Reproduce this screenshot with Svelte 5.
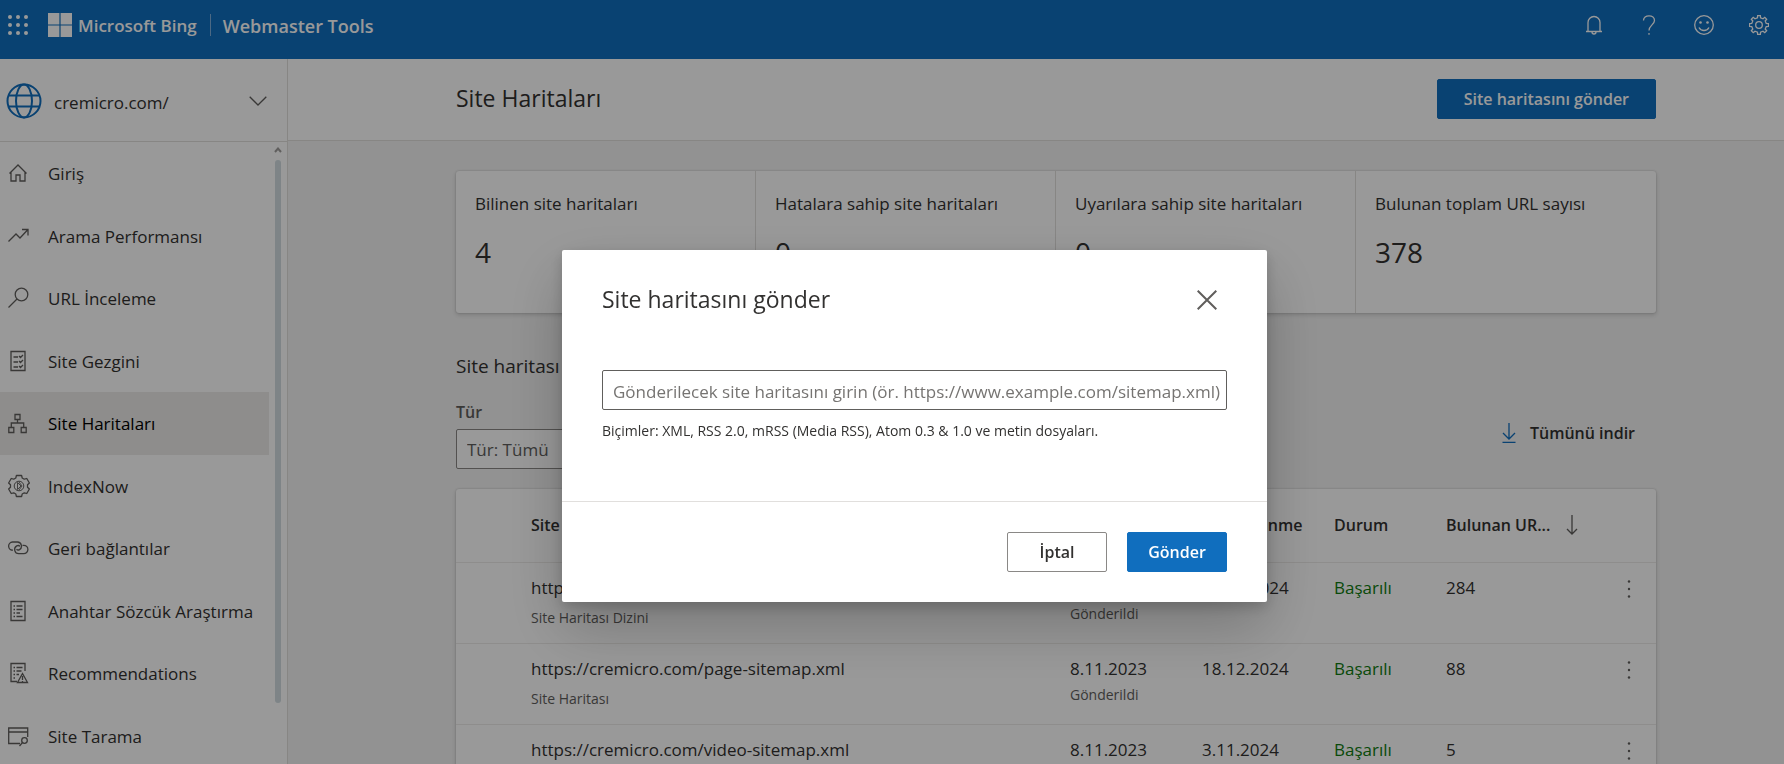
<script lang="ts">
	let sitemapUrl = $state('');

	const nav = [
		{ icon: 'home', label: 'Giriş' },
		{ icon: 'trend', label: 'Arama Performansı' },
		{ icon: 'search', label: 'URL İnceleme' },
		{ icon: 'checklist', label: 'Site Gezgini' },
		{ icon: 'sitemap', label: 'Site Haritaları', active: true },
		{ icon: 'indexnow', label: 'IndexNow' },
		{ icon: 'link', label: 'Geri bağlantılar' },
		{ icon: 'doc', label: 'Anahtar Sözcük Araştırma' },
		{ icon: 'docwarn', label: 'Recommendations' },
		{ icon: 'scan', label: 'Site Tarama' }
	];

	const stats = [
		{ label: 'Bilinen site haritaları', value: 4 },
		{ label: 'Hatalara sahip site haritaları', value: 0 },
		{ label: 'Uyarılara sahip site haritaları', value: 0 },
		{ label: 'Bulunan toplam URL sayısı', value: 378 }
	];

	const rows = [
		{ url: 'https://cremicro.com/sitemap_index.xml', type: 'Site Haritası Dizini', sent: '8.11.2023', crawled: '18.12.2024', count: 284 },
		{ url: 'https://cremicro.com/page-sitemap.xml', type: 'Site Haritası', sent: '8.11.2023', crawled: '18.12.2024', count: 88 },
		{ url: 'https://cremicro.com/video-sitemap.xml', type: 'Site Haritası', sent: '8.11.2023', crawled: '3.11.2024', count: 5 }
	];

	// outline of a cog wheel; tip and root are half widths in degrees
	function gear(cx: number, cy: number, teeth: number, outer: number, inner: number, tip: number, root: number) {
		const points: string[] = [];
		for (let i = 0; i < teeth; i++) {
			const mid = (360 / teeth) * i - 90;
			for (const [offset, r] of [[-root, inner], [-tip, outer], [tip, outer], [root, inner]]) {
				const a = ((mid + offset) * Math.PI) / 180;
				points.push(`${(cx + r * Math.cos(a)).toFixed(2)} ${(cy + r * Math.sin(a)).toFixed(2)}`);
			}
		}
		return `M${points.join('L')}Z`;
	}
</script>

{#snippet navIcon(name: string)}
	<svg class="nav-icon" viewBox="0 0 24 24" aria-hidden="true">
		{#if name === 'home'}
			<path d="M1.5 12.5L10 4l8.500 8.500M3 11v9h5v-6h4v6h5v-9" />
		{:else if name === 'trend'}
			<path d="M.5 17.500L8 10l4 4 7.500-8M14 5.500h6v6" />
		{:else if name === 'search'}
			<circle cx="13.500" cy="8.500" r="6.300" /><path d="M9 13L.500 21.500" />
		{:else if name === 'checklist'}
			<path d="M3 2.500h14v19H3zM5.500 8h4.500M5.500 13h4.500M5.500 18h4.500M11 7l1.500 1.500L15 6M11 12l1.500 1.500L15 11M11 17l1.500 1.500L15 16" />
		{:else if name === 'sitemap'}
			<path d="M7 3.500h5v5H7zM.800 16.500h5v5h-5zM13.200 16.500h5v5h-5zM9.500 8.500V12M3.300 16.500V12h12.400v4.500" />
		{:else if name === 'indexnow'}
			<path d={gear(11, 12, 6, 10.8, 8.6, 14, 22)} stroke-linejoin="round" />
			<circle cx="11" cy="12" r="4.800" stroke-width="1" /><path d="M9.500 8.500v7l3.500-3.500zM11 8l3 4-3 4" stroke-width=".900" />
		{:else if name === 'link'}
			<path d="M5 14.200A4.100 4.100 0 0 1 4.500 6h5a4.100 4.100 0 0 1 2 7.600c-1 .600-2.200.500-3-.300" />
			<path d="M14.500 9.300h1.200a4.200 4.200 0 0 1 0 8.400h-5a4.200 4.200 0 0 1-2-7.800c1.200-.600 2.500-.400 3.400.500" />
		{:else if name === 'doc'}
			<path d="M3 2.500h14v19H3zM5.500 7H7M8.500 7h6M5.500 10.500H7M8.500 10.500h6M5.500 14H7M8.500 14H12M5.500 17.500H7M8.500 17.500h6" />
		{:else if name === 'docwarn'}
			<path d="M9 20.500H3v-18h14V10M5.500 6.500H7M8.500 6.500h6M5.500 10H7M8.500 10h5M5.500 13.500H7M8.500 13.500H11M5.500 17H7M14.500 12.500l-5 9h10zM14.500 15v4M14.500 20v1" />
		{:else}
			<path d="M12 19.500H.700V4h19v9M.700 8h19" /><circle cx="16.500" cy="16.500" r="2.800" /><path d="M14.500 18.500L11.500 22" />
		{/if}
	</svg>
{/snippet}

<div class="app">
	<header class="topbar">
		<button class="plain" aria-label="Uygulama başlatıcı">
			<svg class="waffle" viewBox="0 0 20 20" aria-hidden="true">
				{#each [2, 10, 18] as y}
					{#each [2, 10, 18] as x}
						<circle cx={x} cy={y} r="2" />
					{/each}
				{/each}
			</svg>
		</button>
		<svg class="ms-logo" viewBox="0 0 24 24" aria-hidden="true">
			<path d="M0 0h11.400v11.400H0zM12.600 0H24v11.400H12.600zM0 12.600h11.400V24H0zM12.600 12.600H24V24H12.600z" />
		</svg>
		<span class="brand">Microsoft Bing</span>
		<span class="product">Webmaster Tools</span>
		<div class="tools">
			<button class="plain" aria-label="Bildirimler">
				<svg viewBox="0 0 20 20" aria-hidden="true"><path d="M4 16.500V7.500a6 6 0 0 1 12 0v9M2 16.500h16M8 17a2 2 0 0 0 4 0" /></svg>
			</button>
			<button class="plain" aria-label="Yardım">
				<svg viewBox="0 0 20 20" aria-hidden="true"><path d="M4.500 5.500C4.500 2.500 7 .800 10 .800s5.500 1.800 5.500 4.700c0 4-5.500 5-5.500 10M10 18v1.700" /></svg>
			</button>
			<button class="plain" aria-label="Geri bildirim">
				<svg viewBox="0 0 20 20" aria-hidden="true"><circle cx="10" cy="10" r="9.300" /><path d="M5 12.500c2 4 8 4 10 0" /><circle class="dot" cx="6.500" cy="7.500" r="1.300" /><circle class="dot" cx="13.500" cy="7.500" r="1.300" /></svg>
			</button>
			<button class="plain" aria-label="Ayarlar">
				<svg viewBox="0 0 20 20" aria-hidden="true"><path d={gear(10, 10, 8, 9.6, 7.4, 8, 12)} /><circle cx="10" cy="10" r="3.300" /></svg>
			</button>
		</div>
	</header>

	<div class="body">
		<aside class="sidebar">
			<button class="site-picker">
				<svg class="globe" viewBox="0 0 36 36" aria-hidden="true">
					<circle cx="18" cy="18" r="16.500" /><ellipse cx="18" cy="18" rx="8" ry="16.500" /><path d="M2.500 12.500h31M2.500 23.500h31" />
				</svg>
				<span class="site-name">cremicro.com/</span>
				<svg class="chevron" viewBox="0 0 18 10" aria-hidden="true"><path d="M.700.700L9 9l8.300-8.300" /></svg>
			</button>
			<div class="nav-wrap">
				<nav>
					{#each nav as item}
						<a href="#{item.icon}" class:active={item.active}>
							{@render navIcon(item.icon)}
							<span>{item.label}</span>
						</a>
					{/each}
				</nav>
				<div class="scrollbar">
					<svg viewBox="0 0 8 6" aria-hidden="true"><path d="M1 5l3-3.500L7 5" /></svg>
					<div class="thumb"></div>
				</div>
			</div>
		</aside>

		<main>
			<div class="page-head">
				<h1>Site Haritaları</h1>
				<button class="primary wide">Site haritasını gönder</button>
			</div>

			<div class="content">
				<div class="stats card">
					{#each stats as stat}
						<div class="stat">
							<span>{stat.label}</span>
							<strong>{stat.value}</strong>
						</div>
					{/each}
				</div>

				<h2>Site haritası</h2>
				<div class="filters">
					<div class="filter">
						<label for="type">Tür</label>
						<select id="type">
							<option>Tür: Tümü</option>
						</select>
					</div>
					<button class="plain download">
						<svg viewBox="0 0 16 20" aria-hidden="true"><path d="M8 0v15.500M2 10l6 6 6-6M1.500 19.300h13" /></svg>
						Tümünü indir
					</button>
				</div>

				<div class="card">
					<table>
						<thead>
							<tr>
								<th class="col-url">Site haritası</th>
								<th class="col-sent">Gönderim</th>
								<th class="col-crawl">Son Gezinme</th>
								<th class="col-status">Durum</th>
								<th class="col-count">
									<span class="sort">
										Bulunan UR...
										<svg viewBox="0 0 12 20" aria-hidden="true"><path d="M6 0v19M1 14l5 5 5-5" /></svg>
									</span>
								</th>
								<th class="col-menu"></th>
							</tr>
						</thead>
						<tbody>
							{#each rows as row}
								<tr>
									<td class="col-url">{row.url}<small class="type">{row.type}</small></td>
									<td>{row.sent}<small>Gönderildi</small></td>
									<td>{row.crawled}</td>
									<td class="ok">Başarılı</td>
									<td>{row.count}</td>
									<td>
										<button class="plain more" aria-label="Diğer seçenekler">
											<svg viewBox="0 0 4 20" aria-hidden="true"><circle cx="2" cy="2.500" r="1.200" /><circle cx="2" cy="10" r="1.200" /><circle cx="2" cy="17.500" r="1.200" /></svg>
										</button>
									</td>
								</tr>
							{/each}
						</tbody>
					</table>
				</div>
			</div>
		</main>
	</div>
</div>

<div class="overlay">
	<div class="dialog" role="dialog" aria-modal="true" aria-labelledby="dialog-title">
		<div class="dialog-head">
			<h2 id="dialog-title">Site haritasını gönder</h2>
			<button class="plain close" aria-label="Kapat">
				<svg viewBox="0 0 20 20" aria-hidden="true"><path d="M.700.700l18.600 18.600M19.300.700L.700 19.300" /></svg>
			</button>
		</div>
		<div class="dialog-body">
			<input
				type="text"
				bind:value={sitemapUrl}
				aria-label="Site haritası URL'si"
				aria-describedby="formats"
				placeholder="Gönderilecek site haritasını girin (ör. https://www.example.com/sitemap.xml)"
			/>
			<p id="formats">Biçimler: XML, RSS 2.0, mRSS (Media RSS), Atom 0.3 &amp; 1.0 ve metin dosyaları.</p>
		</div>
		<div class="dialog-foot">
			<button class="secondary">İptal</button>
			<button class="primary">Gönder</button>
		</div>
	</div>
</div>

<style>
	:global(body) {
		margin: 0;
		overflow: hidden;
		font-family: 'Segoe UI', 'Open Sans', 'Noto Sans', sans-serif;
		font-size: 17px;
		line-height: 24px;
		color: #323130;
	}

	* {
		box-sizing: border-box;
	}

	button,
	input,
	select {
		font: inherit;
		color: inherit;
	}

	svg {
		display: block;
		flex: none;
		fill: none;
		stroke: currentColor;
		stroke-width: 1.3;
	}

	h1,
	h2,
	p {
		margin: 0;
		font-weight: 400;
	}

	.plain {
		padding: 0;
		border: 0;
		background: none;
	}

	.app {
		display: flex;
		flex-direction: column;
		height: 100vh;
		overflow: hidden;
	}

	.topbar {
		display: flex;
		flex: none;
		align-items: center;
		height: 59px;
		padding: 0 15px 9px 8px;
		background: #106ebe;
		color: #fff;
	}

	.waffle {
		width: 20px;
		height: 20px;
		fill: #fff;
		stroke: none;
	}

	.ms-logo {
		width: 24px;
		height: 24px;
		margin-left: 20px;
		fill: #fff;
		stroke: none;
	}

	.brand,
	.product {
		padding-top: 2px;
		font-weight: 600;
		line-height: 20px;
	}

	.brand {
		margin-left: 6px;
	}

	.product {
		margin-left: 13px;
		padding-left: 12px;
		border-left: 1px solid #7fb0dc;
		font-size: 18px;
	}

	.tools {
		display: flex;
		gap: 35px;
		margin-left: auto;
	}

	.tools svg {
		width: 20px;
		height: 20px;
	}

	.dot {
		fill: currentColor;
		stroke: none;
	}

	.body {
		display: flex;
		flex: 1;
		min-height: 0;
	}

	.sidebar {
		display: flex;
		flex: none;
		flex-direction: column;
		width: 288px;
		border-right: 1px solid #e1dfdd;
		background: #fff;
	}

	.site-picker {
		display: flex;
		flex: none;
		align-items: center;
		height: 83px;
		padding: 2px 20px 0 6px;
		border: 0;
		border-bottom: 1px solid #e1dfdd;
		background: none;
		text-align: left;
	}

	.globe {
		width: 36px;
		height: 36px;
		color: #106ebe;
		stroke-width: 2;
	}

	.site-name {
		flex: 1;
		margin: 4px 0 0 12px;
	}

	.chevron {
		width: 18px;
		height: 10px;
		color: #605e5c;
	}

	.nav-wrap {
		display: flex;
		flex: 1;
		min-height: 0;
	}

	nav {
		display: grid;
		grid-template-rows: repeat(10, 1fr);
		flex: 1;
		height: 625px;
	}

	nav a {
		display: flex;
		gap: 16px;
		align-items: center;
		padding-left: 8px;
		color: #323130;
		text-decoration: none;
	}

	nav a.active {
		background: #edebe9;
		color: #000;
	}

	nav span {
		padding-top: 2px;
	}

	.nav-icon {
		width: 24px;
		height: 24px;
		color: #605e5c;
	}

	.scrollbar {
		display: flex;
		flex-direction: column;
		align-items: center;
		gap: 7px;
		width: 18px;
		padding: 5px 0 61px;
	}

	.scrollbar svg {
		width: 8px;
		height: 6px;
		color: #a19f9d;
		stroke-width: 2;
	}

	.thumb {
		flex: 1;
		width: 6px;
		border-radius: 3px;
		background: #d2dce2;
	}

	main {
		flex: 1;
		min-width: 0;
		background: #f3f3f3;
	}

	.page-head {
		display: flex;
		align-items: center;
		justify-content: space-between;
		height: 82px;
		padding: 0 128px 2px 168px;
		border-bottom: 1px solid #e1dfdd;
		background: #fff;
	}

	h1,
	.dialog h2 {
		padding-bottom: 2px;
		font-size: 23px;
		line-height: 32px;
	}

	.primary,
	.secondary {
		min-width: 100px;
		height: 40px;
		padding: 0 20px;
		border: 1px solid #8a8886;
		border-radius: 2px;
		background: #fff;
		font-size: 16px;
		font-weight: 600;
	}

	.primary {
		border-color: #106ebe;
		background: #106ebe;
		color: #fff;
	}

	.wide {
		padding: 0 26px;
	}

	.content {
		padding: 30px 128px 0 168px;
	}

	.card {
		border-radius: 3px;
		background: #fff;
		box-shadow: 0 0 2px rgba(0, 0, 0, 0.2), 0 2px 4px rgba(0, 0, 0, 0.15);
	}

	.stats {
		display: grid;
		grid-template-columns: repeat(4, 1fr);
	}

	.stat {
		display: flex;
		flex-direction: column;
		gap: 20px;
		height: 142px;
		padding: 21px 19px;
		border-right: 1px solid #e1dfdd;
	}

	.stat:last-child {
		border-right: 0;
	}

	.stat strong {
		font-size: 28px;
		font-weight: 400;
		line-height: 32px;
	}

	.content h2 {
		margin-top: 41px;
		font-size: 19px;
	}

	.filters {
		display: flex;
		align-items: center;
		justify-content: space-between;
		margin: 22px 0 20px;
	}

	.filter {
		display: flex;
		flex-direction: column;
		gap: 5px;
		width: 240px;
		color: #605e5c;
	}

	.filter label {
		font-size: 16px;
		font-weight: 600;
	}

	select {
		height: 40px;
		padding: 2px 10px 0;
		border: 1px solid #8a8886;
		border-radius: 2px;
		background: #fff;
		appearance: none;
	}

	.download {
		display: flex;
		gap: 13px;
		align-items: center;
		margin: 0 21px 4px 0;
		font-size: 16px;
		font-weight: 600;
	}

	.download svg {
		width: 16px;
		height: 20px;
		color: #106ebe;
	}

	table {
		width: 100%;
		border-collapse: collapse;
		table-layout: fixed;
	}

	th,
	td {
		padding: 0;
		border-bottom: 1px solid #edebe9;
		text-align: left;
	}

	th {
		height: 73px;
		font-size: 16px;
		font-weight: 600;
		white-space: nowrap;
	}

	td {
		height: 81px;
		padding-top: 13px;
		vertical-align: top;
	}

	.col-url {
		padding-left: 75px;
	}

	.col-sent,
	.col-crawl {
		width: 132px;
	}

	.col-status {
		width: 112px;
	}

	.col-count {
		width: 181px;
	}

	.col-menu {
		width: 29px;
	}

	small {
		display: block;
		margin-top: 2px;
		color: #605e5c;
		font-size: 14px;
	}

	small.type {
		margin-top: 6px;
	}

	.ok {
		color: #107c10;
	}

	.sort {
		display: flex;
		gap: 16px;
		align-items: center;
	}

	.sort svg {
		width: 12px;
		height: 20px;
		color: #605e5c;
	}

	.more svg {
		width: 4px;
		height: 20px;
		margin-top: 3px;
		fill: #605e5c;
		stroke: none;
	}

	.overlay {
		position: fixed;
		inset: 0;
		display: flex;
		align-items: center;
		justify-content: center;
		padding: 88px 0 0 45px;
		background: rgba(0, 0, 0, 0.4);
	}

	.dialog {
		width: 705px;
		border-radius: 2px;
		background: #fff;
		box-shadow: 0 26px 58px rgba(0, 0, 0, 0.22), 0 5px 14px rgba(0, 0, 0, 0.18);
	}

	.dialog-head {
		display: flex;
		align-items: center;
		justify-content: space-between;
		padding: 33px 50px 0 40px;
	}

	.close {
		color: #605e5c;
	}

	.close svg {
		width: 20px;
		height: 20px;
		stroke-width: 2;
	}

	.dialog-body {
		padding: 53px 40px 58px;
	}

	input {
		display: block;
		width: 100%;
		height: 40px;
		padding: 2px 4px 0 10px;
		border: 1px solid #605e5c;
		border-radius: 2px;
	}

	input::placeholder {
		color: #767472;
		opacity: 1;
	}

	#formats {
		margin-top: 9px;
		font-size: 14px;
	}

	.dialog-foot {
		display: flex;
		gap: 20px;
		justify-content: flex-end;
		padding: 30px 40px;
		border-top: 1px solid #e1dfdd;
	}
</style>
